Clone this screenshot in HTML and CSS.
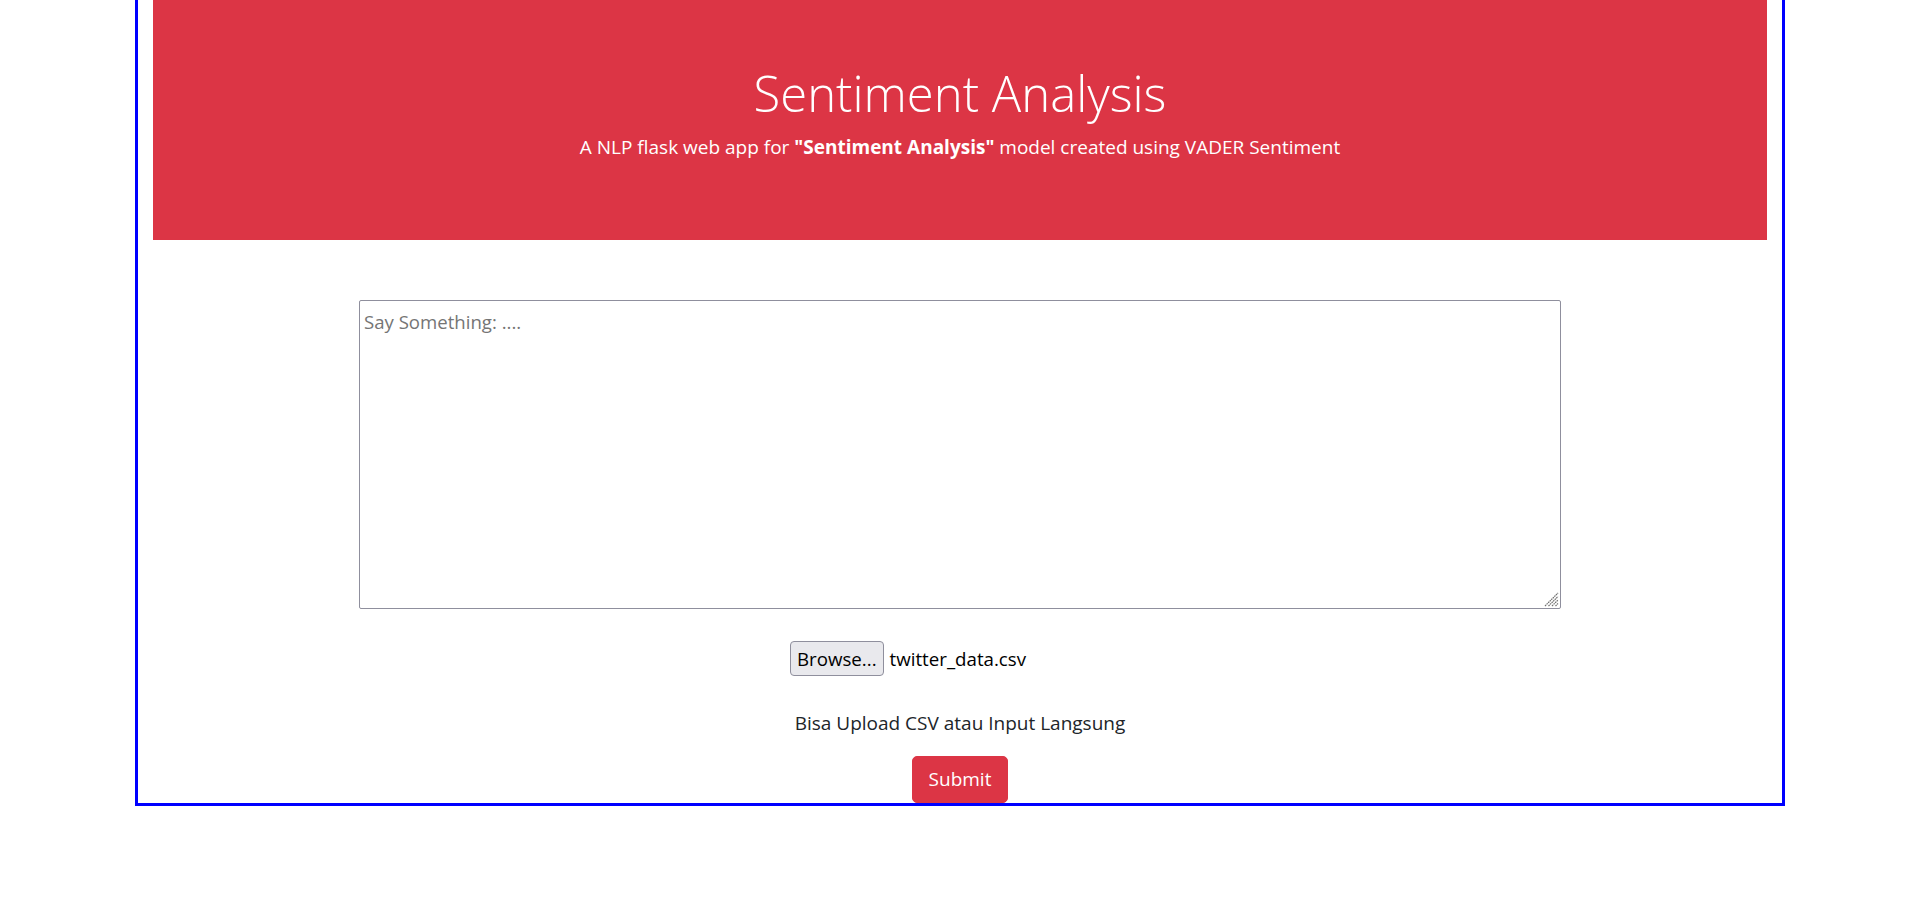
FILE: index.html
```html
<!DOCTYPE html>
<html lang="en">
<head>
<meta charset="utf-8">
<title>Sentiment Analysis</title>
<link rel="stylesheet" href="styles.css">
</head>
<body>
<div class="page">
  <header class="jumbotron">
    <h1 class="title">Sentiment Analysis</h1>
    <p class="lead">A NLP flask web app for <strong>"Sentiment Analysis"</strong> model created using VADER Sentiment</p>
  </header>
  <form class="analyze-form">
    <div class="textarea-wrap">
      <textarea class="message" placeholder="Say Something: ...."></textarea>
      <svg class="grip" width="16" height="16" viewBox="0 0 16 16" aria-hidden="true">
        <g stroke="#6f6f6f" stroke-width="1.2" stroke-dasharray="1.6 0.6">
          <line x1="2" y1="15" x2="15" y2="2"/>
          <line x1="5.5" y1="15" x2="15" y2="5.5"/>
          <line x1="9" y1="15" x2="15" y2="9"/>
          <line x1="12.5" y1="15" x2="15" y2="12.5"/>
        </g>
      </svg>
    </div>
    <label class="file-picker">
      <span class="file-btn">Browse...</span>
      <span class="file-name">twitter_data.csv</span>
    </label>
    <p class="hint">Bisa Upload CSV atau Input Langsung</p>
    <button type="button" class="submit">Submit</button>
  </form>
</div>
</body>
</html>
```
FILE: styles.css
```css
html, body {
  margin: 0;
  padding: 0;
  background: #ffffff;
}
body {
  font-family: "Open Sans", "Noto Sans", "Liberation Sans", sans-serif;
  color: #212529;
  font-size: 16px;
}
.page {
  width: 1650px;
  box-sizing: border-box;
  margin: 0 0 0 135px;
  border: 3px solid #0000ff;
  border-top: none;
  padding: 0 15px;
}
.jumbotron {
  background: #dc3545;
  color: #ffffff;
  height: 240px;
  box-sizing: border-box;
  padding-top: 64px;
  text-align: center;
  margin-bottom: 60px;
}
.title {
  margin: 0 0 10px;
  font-size: 49px;
  font-weight: 300;
  line-height: 1.2;
}
.lead {
  margin: 0;
  font-size: 19px;
  font-weight: 400;
  line-height: 1.5;
}
.lead strong {
  font-weight: 700;
}
.analyze-form {
  display: flex;
  flex-direction: column;
  align-items: center;
}
.textarea-wrap {
  position: relative;
  width: 1202px;
  height: 309px;
}
.message {
  display: block;
  width: 100%;
  height: 100%;
  box-sizing: border-box;
  border: 1px solid #8f8f9d;
  border-radius: 2px;
  padding: 8px 4px 4px;
  font-family: inherit;
  font-size: 18.6px;
  resize: none;
  margin: 0;
  outline: none;
}
.message::placeholder {
  color: #757575;
}
.grip {
  position: absolute;
  right: 2px;
  bottom: 2px;
}
.file-picker {
  margin-top: 32px;
  width: 340px;
  display: flex;
  align-items: center;
  gap: 6px;
  font-size: 18.7px;
}
.file-btn {
  display: inline-block;
  height: 35px;
  box-sizing: border-box;
  padding: 4px 6px;
  line-height: 25px;
  background: #e9e9ed;
  border: 1px solid #8f8f9d;
  border-radius: 4px;
  color: #000000;
}
.file-name {
  color: #000000;
}
.hint {
  margin: 32px 0 0;
  font-size: 19px;
  line-height: 30px;
}
.submit {
  margin-top: 18px;
  background: #dc3545;
  color: #ffffff;
  border: 1px solid #dc3545;
  border-radius: 5px;
  font-family: inherit;
  font-size: 19px;
  line-height: 29px;
  padding: 8px 16px;
  cursor: pointer;
}
```
